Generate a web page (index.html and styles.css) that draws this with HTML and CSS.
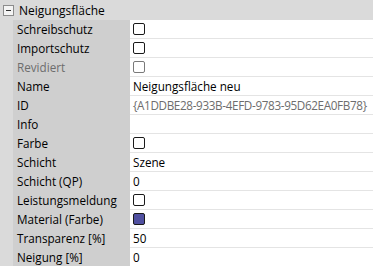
FILE: index.html
```html
<!DOCTYPE html>
<html lang="de">
<head>
  <meta charset="UTF-8" />
  <title>Eigenschaften</title>
  <link rel="stylesheet" href="styles.css">
</head>
<body>
  <div class="grid">
    <!-- Kategorie -->
    <div class="kategorie">
      <span class="toggle"></span>
      <span>Neigungsfläche</span>
    </div>

    <div class="eigenschaften">
      <div class="rand"></div>
      <div class="zeilen">
        <div class="zeile"><div class="name">Schreibschutz</div><div class="wert"><span class="box"></span></div></div>
        <div class="zeile"><div class="name">Importschutz</div><div class="wert"><span class="box"></span></div></div>
        <div class="zeile"><div class="name grau">Revidiert</div><div class="wert"><span class="box grau"></span></div></div>
        <div class="zeile"><div class="name">Name</div><div class="wert">Neigungsfläche neu</div></div>
        <div class="zeile"><div class="name">ID</div><div class="wert grau id">{A1DDBE28-933B-4EFD-9783-95D62EA0FB78}</div></div>
        <div class="zeile"><div class="name">Info</div><div class="wert"></div></div>
        <div class="zeile"><div class="name">Farbe</div><div class="wert"><span class="box"></span></div></div>
        <div class="zeile"><div class="name">Schicht</div><div class="wert">Szene</div></div>
        <div class="zeile"><div class="name">Schicht (QP)</div><div class="wert">0</div></div>
        <div class="zeile"><div class="name">Leistungsmeldung</div><div class="wert"><span class="box"></span></div></div>
        <div class="zeile"><div class="name">Material (Farbe)</div><div class="wert"><span class="box farbe"></span></div></div>
        <div class="zeile"><div class="name">Transparenz [%]</div><div class="wert">50</div></div>
        <div class="zeile"><div class="name">Neigung [%]</div><div class="wert">0</div></div>
      </div>
    </div>
  </div>
</body>
</html>
```

FILE: styles.css
```css
/* Eigenschaftsraster */
body {
  margin: 0;
  font-family: "Open Sans", "Noto Sans", sans-serif;
  font-size: 11.7px;
  color: #000000;
  background-color: #ffffff;
  overflow: hidden;
}

.grid {
  width: 373px;
}

.kategorie {
  display: flex;
  align-items: center;
  gap: 5px;
  height: 20px;
  padding-left: 3px;
  font-size: 12px;
  background-color: #dadada;
}

.toggle {
  position: relative;
  width: 9px;
  height: 9px;
  border: 1px solid #8c8c8c;
  background-color: #f4f4f4;
}

.toggle::after {
  content: "";
  position: absolute;
  left: 2px;
  top: 4px;
  width: 5px;
  height: 1px;
  background-color: #333;
}

.eigenschaften {
  display: flex;
}

.rand {
  flex: 0 0 13px;
  background-color: #dadada;
}

.zeilen {
  flex: 1;
  min-width: 0;
}

.zeile {
  display: flex;
  height: 19px;
}

.name {
  flex: 0 0 117px;
  padding-left: 4px;
  box-sizing: border-box;
  line-height: 19px;
  background-color: #cfcfcf;
}

.wert {
  flex: 1;
  min-width: 0;
  display: flex;
  align-items: center;
  padding-left: 3px;
  border-bottom: 1px solid #e4e4e4;
  white-space: nowrap;
}

.wert.id {
  letter-spacing: -0.35px;
}

.grau {
  color: #6d6d6d;
}

.box {
  flex: 0 0 auto;
  width: 10px;
  height: 10px;
  border: 1px solid #1a1a1a;
  border-radius: 2px;
  background-color: #ffffff;
}

.box.grau {
  border-color: #7a7a7a;
}

.box.farbe {
  background-color: #5050a0;
}
```
